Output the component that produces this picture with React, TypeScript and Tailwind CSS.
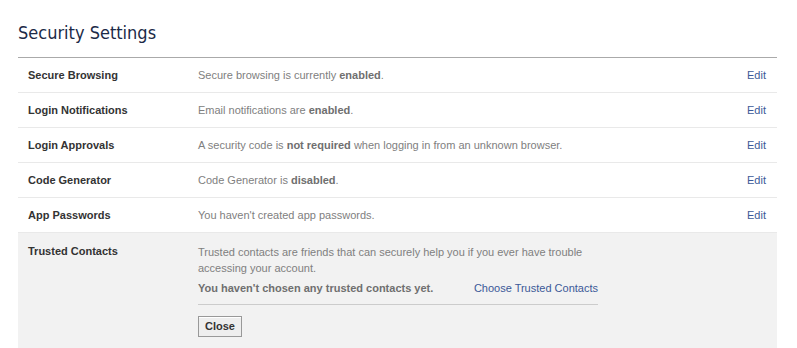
import React from 'react';

type Row = {
  label: string;
  desc: React.ReactNode;
};

const rows: Row[] = [
  { label: 'Secure Browsing', desc: <>Secure browsing is currently <b className="text-[#6f6f6f]">enabled</b>.</> },
  { label: 'Login Notifications', desc: <>Email notifications are <b className="text-[#6f6f6f]">enabled</b>.</> },
  {
    label: 'Login Approvals',
    desc: <>A security code is <b className="text-[#6f6f6f]">not required</b> when logging in from an unknown browser.</>,
  },
  { label: 'Code Generator', desc: <>Code Generator is <b className="text-[#6f6f6f]">disabled</b>.</> },
  { label: 'App Passwords', desc: <>You haven't created app passwords.</> },
];

export default function App() {
  return (
    <div className="w-[797px] h-[348px] bg-white overflow-hidden font-['Liberation_Sans',Arial,sans-serif] text-[11px]">
      <div className="pl-[18px] pr-[20px]">
        <h1 className="pt-[19px] h-[57px] text-[18px] text-[#1c2a47] font-['DejaVu_Sans_Condensed','Liberation_Sans',sans-serif]">
          Security Settings
        </h1>
        <div className="border-t border-[#aaaaaa]">
          {rows.map((r) => (
            <div key={r.label} className="flex items-center h-[35px] border-b border-[#e9e9e9] pl-[10px] pr-[11px] pt-[1px]">
              <div className="w-[170px] font-bold text-[#333]">{r.label}</div>
              <div className="flex-1 text-[#808080]">{r.desc}</div>
              <a className="text-[#3b5998]">Edit</a>
            </div>
          ))}
          <div className="flex bg-[#f2f2f2] h-[116px] pl-[10px] pt-[10px]">
            <div className="w-[170px] font-bold text-[#333]">Trusted Contacts</div>
            <div className="w-[400px] text-[#808080]">
              <p className="leading-[16px] pt-[1px]">
                Trusted contacts are friends that can securely help you if you ever have trouble
                <br />
                accessing your account.
              </p>
              <div className="flex mt-[4px] pb-[8px] border-b border-[#cccccc] leading-[16px] whitespace-nowrap">
                <b className="text-[#6f6f6f] w-[278px]">You haven't chosen any trusted contacts yet.</b>
                <a className="text-[#3b5998]">Choose Trusted Contacts</a>
              </div>
              <button className="mt-[11px] h-[21px] px-[6px] border border-[#999] bg-[#eeeeee] text-[#333] font-bold text-[11px] shadow-[inset_0_1px_0_#fff]">
                Close
              </button>
            </div>
          </div>
        </div>
      </div>
    </div>
  );
}
